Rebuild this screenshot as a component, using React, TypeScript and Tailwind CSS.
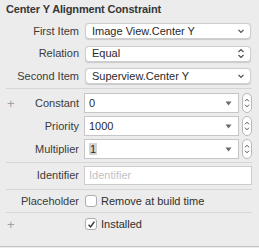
import type { ReactNode } from 'react'

function ChevronDown() {
  return (
    <svg width="8" height="6" viewBox="0 0 8 6" className="text-[#4a4a4a]">
      <path d="M1.5 1.8 L4 4.3 L6.5 1.8" fill="none" stroke="currentColor" strokeWidth="1.2" />
    </svg>
  )
}

function UpDown() {
  return (
    <svg width="8" height="11" viewBox="0 0 8 11" className="text-[#4a4a4a]">
      <path d="M1.5 4 L4 1.5 L6.5 4" fill="none" stroke="currentColor" strokeWidth="1.1" />
      <path d="M1.5 7 L4 9.5 L6.5 7" fill="none" stroke="currentColor" strokeWidth="1.1" />
    </svg>
  )
}

function Stepper() {
  return (
    <div className="w-[10px] h-[20px] rounded-full border border-[#b9b9b9] bg-white flex flex-col items-center justify-center gap-[2px]">
      <svg width="6" height="4" viewBox="0 0 6 4" className="text-[#555]">
        <path d="M1 3.3 L3 1.2 L5 3.3" fill="none" stroke="currentColor" strokeWidth="1" />
      </svg>
      <svg width="6" height="4" viewBox="0 0 6 4" className="text-[#555]">
        <path d="M1 0.7 L3 2.8 L5 0.7" fill="none" stroke="currentColor" strokeWidth="1" />
      </svg>
    </div>
  )
}

function Label({ children }: { children: ReactNode }) {
  return <div className="w-[79px] text-right text-[11px] text-[#3b3b3b] leading-none">{children}</div>
}

function Popup({ value, both }: { value: string; both?: boolean }) {
  return (
    <div className="ml-[6px] w-[166px] h-[16px] bg-white rounded-[4px] border border-[#cfcfcf] shadow-[0_0.5px_1px_rgba(0,0,0,0.15)] flex items-center pl-[6px] pr-[5px]">
      <span className="flex-1 text-[11px] text-[#2a2a2a] leading-none">{value}</span>
      {both ? <UpDown /> : <ChevronDown />}
    </div>
  )
}

function Combo({ value, highlight }: { value: string; highlight?: boolean }) {
  return (
    <div className="ml-[5px] flex items-center gap-[3px]">
      <div className="w-[155px] h-[20px] bg-white border border-[#c6c6c6] flex items-center pl-[4px] pr-[6px]">
        <span className="flex-1 text-[11px] text-[#2a2a2a] leading-none">
          <span className={highlight ? 'bg-[#d4d4d4] px-[1px]' : ''}>{value}</span>
        </span>
        <svg width="7" height="5" viewBox="0 0 7 5">
          <path d="M0.5 0.5 L6.5 0.5 L3.5 4.5 Z" fill="#6a6a6a" />
        </svg>
      </div>
      <Stepper />
    </div>
  )
}

function Checkbox({ checked }: { checked?: boolean }) {
  return (
    <div className="ml-[6px] w-[12px] h-[12px] rounded-[3px] bg-white border border-[#adadad] flex items-center justify-center">
      {checked && (
        <svg width="9" height="9" viewBox="0 0 9 9">
          <path d="M1.6 4.8 L3.6 7 L7.4 1.6" fill="none" stroke="#333" strokeWidth="1.4" />
        </svg>
      )}
    </div>
  )
}

function Sep() {
  return <div className="h-px bg-[#d6d6d6] ml-[6px] mr-[7px]" />
}

export default function App() {
  return (
    <div className="w-[259px] h-[248px] bg-[#ececec] font-['Liberation_Sans',Arial,sans-serif] flex flex-col">
      <div className="h-[23px] pl-[6px] pt-[4px] text-[11px] font-bold text-[#363636] leading-none tracking-[-0.15px]">
        Center Y Alignment Constraint
      </div>

      <div className="flex flex-col gap-[6.5px]">
        <div className="flex items-center">
          <Label>First Item</Label>
          <Popup value="Image View.Center Y" />
        </div>
        <div className="flex items-center">
          <Label>Relation</Label>
          <Popup value="Equal" both />
        </div>
        <div className="flex items-center">
          <Label>Second Item</Label>
          <Popup value="Superview.Center Y" />
        </div>
      </div>

      <div className="mt-[4px]">
        <Sep />
      </div>

      <div className="mt-[4px] flex flex-col gap-[3px]">
        <div className="flex items-center relative">
          <span className="absolute left-[7px] text-[13px] text-[#a0a0a0] leading-none">+</span>
          <Label>Constant</Label>
          <Combo value="0" />
        </div>
        <div className="flex items-center">
          <Label>Priority</Label>
          <Combo value="1000" />
        </div>
        <div className="flex items-center">
          <Label>Multiplier</Label>
          <Combo value="1" highlight />
        </div>
      </div>

      <div className="mt-[3px]">
        <Sep />
      </div>

      <div className="mt-[3px] flex items-center">
        <Label>Identifier</Label>
        <div className="ml-[5px] w-[168px] h-[19px] bg-white border border-[#cccccc] flex items-center pl-[4px]">
          <span className="text-[11px] text-[#c2c2c2] leading-none">Identifier</span>
        </div>
      </div>

      <div className="mt-[4px]">
        <Sep />
      </div>

      <div className="h-[22px] flex items-center">
        <Label>Placeholder</Label>
        <Checkbox />
        <span className="ml-[4px] text-[11px] text-[#2f2f2f] leading-none">Remove at build time</span>
      </div>

      <Sep />

      <div className="h-[22px] flex items-center relative">
        <span className="absolute left-[7px] text-[13px] text-[#a0a0a0] leading-none">+</span>
        <Label> </Label>
        <Checkbox checked />
        <span className="ml-[4px] text-[11px] text-[#2f2f2f] leading-none">Installed</span>
      </div>

      <div className="mt-auto mb-[1px] h-px bg-[#c4c4c4]" />
    </div>
  )
}
